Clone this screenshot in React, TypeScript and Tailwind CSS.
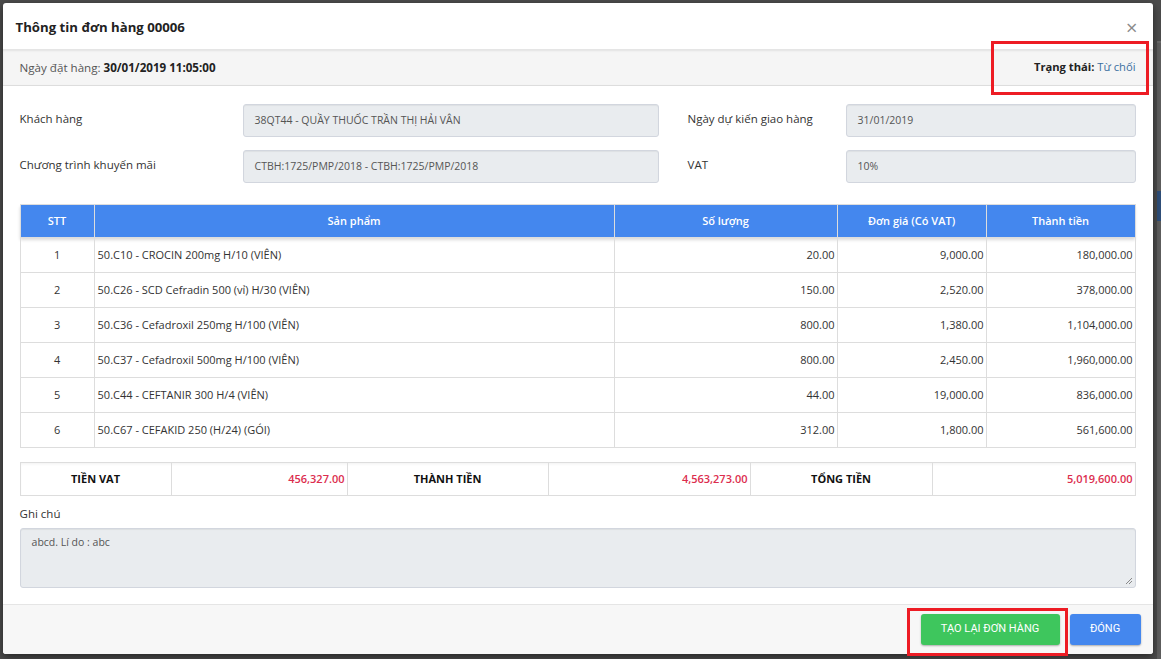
import React from 'react';

interface Row {
  stt: number;
  name: string;
  qty: string;
  price: string;
  total: string;
}

const rows: Row[] = [
  { stt: 1, name: '50.C10 - CROCIN 200mg H/10 (VIÊN)', qty: '20.00', price: '9,000.00', total: '180,000.00' },
  { stt: 2, name: '50.C26 - SCD Cefradin 500 (vỉ) H/30 (VIÊN)', qty: '150.00', price: '2,520.00', total: '378,000.00' },
  { stt: 3, name: '50.C36 - Cefadroxil 250mg H/100 (VIÊN)', qty: '800.00', price: '1,380.00', total: '1,104,000.00' },
  { stt: 4, name: '50.C37 - Cefadroxil 500mg H/100 (VIÊN)', qty: '800.00', price: '2,450.00', total: '1,960,000.00' },
  { stt: 5, name: '50.C44 - CEFTANIR 300 H/4 (VIÊN)', qty: '44.00', price: '19,000.00', total: '836,000.00' },
  { stt: 6, name: '50.C67 - CEFAKID 250 (H/24) (GÓI)', qty: '312.00', price: '1,800.00', total: '561,600.00' },
];

const font = "font-['Open_Sans','Noto_Sans',sans-serif]";

const ReadOnlyField = ({ value }: { value: string }) => (
  <div className="h-[33px] rounded-[3px] border border-[#d2d6de] bg-[#e9ecef] px-[11px] flex items-center text-[10.5px] text-[#555] shadow-[inset_0_1px_1px_rgba(0,0,0,0.05)]">
    {value}
  </div>
);

const App = () => {
  return (
    <div className={`${font} flex h-[659px] w-[1161px] overflow-hidden bg-[#4c4c4c]`}>
      <div className="w-[4px]" />
      <div className="flex flex-col pt-[3px]">
        <div className="relative flex h-[651px] w-[1150px] flex-col rounded-[3px] bg-white shadow-[0_3px_9px_rgba(0,0,0,0.5)]">
          {/* header */}
          <div className="flex h-[47px] items-center justify-between border-b border-[#e5e5e5] pl-[13px] pr-[15px] pt-[3px]">
            <h4 className="text-[13.2px] font-bold text-[#222]">Thông tin đơn hàng 00006</h4>
            <span className="text-[20px] leading-none text-[#8a8a8a]">×</span>
          </div>

          {/* order date / status */}
          <div className="flex h-[36px] items-center justify-between border-b border-[#ddd] bg-[#f5f5f5] pl-[17px] pr-[17px] text-[11.6px] text-[#333] shadow-[inset_0_1px_2px_rgba(0,0,0,0.08)]">
            <div>
              <span className="text-[#555]">Ngày đặt hàng: </span>
              <span className="font-bold text-[#222]">30/01/2019 11:05:00</span>
            </div>
            <div className="text-[11.2px]">
              <span className="font-bold text-[#222]">Trạng thái: </span>
              <span className="text-[#3b6fa0]">Từ chối</span>
            </div>
          </div>

          {/* body */}
          <div className="flex flex-1 flex-col px-[17px] pt-[18px]">
            <div className="grid grid-cols-[223px_416px_29px_158px_290px] gap-y-[13px] text-[11.5px] text-[#333]">
              <div className="pt-[6px]">Khách hàng</div>
              <ReadOnlyField value="38QT44 - QUẦY THUỐC TRẦN THỊ HẢI VÂN" />
              <div />
              <div className="pt-[6px]">Ngày dự kiến giao hàng</div>
              <ReadOnlyField value="31/01/2019" />
              <div className="pt-[6px]">Chương trình khuyến mãi</div>
              <ReadOnlyField value="CTBH:1725/PMP/2018 - CTBH:1725/PMP/2018" />
              <div />
              <div className="pt-[6px]">VAT</div>
              <ReadOnlyField value="10%" />
            </div>

            {/* products */}
            <table className="mt-[21px] w-full table-fixed border-collapse text-[11px] text-[#333]">
              <colgroup>
                <col className="w-[74px]" />
                <col className="w-[520px]" />
                <col className="w-[223px]" />
                <col className="w-[149px]" />
                <col />
              </colgroup>
              <thead>
                <tr className="h-[33px] bg-[#4487ee] text-white shadow-[0_2px_3px_rgba(0,0,0,0.15)]">
                  {['STT', 'Sản phẩm', 'Số lượng', 'Đơn giá (Có VAT)', 'Thành tiền'].map((h) => (
                    <th key={h} className="border border-[#ddd] font-semibold">
                      {h}
                    </th>
                  ))}
                </tr>
              </thead>
              <tbody>
                {rows.map((r) => (
                  <tr key={r.stt} className="h-[35px]">
                    <td className="border border-[#ddd] text-center">{r.stt}</td>
                    <td className="border border-[#ddd] px-[3px]">{r.name}</td>
                    <td className="border border-[#ddd] px-[2px] text-right">{r.qty}</td>
                    <td className="border border-[#ddd] px-[2px] text-right">{r.price}</td>
                    <td className="border border-[#ddd] px-[2px] text-right">{r.total}</td>
                  </tr>
                ))}
              </tbody>
            </table>

            {/* totals */}
            <table className="mt-[14px] w-full table-fixed border-collapse text-[11px] shadow-[inset_0_2px_3px_rgba(0,0,0,0.06)]">
              <colgroup>
                <col className="w-[151px]" />
                <col className="w-[176px]" />
                <col className="w-[201px]" />
                <col className="w-[202px]" />
                <col className="w-[182px]" />
                <col />
              </colgroup>
              <tbody>
                <tr className="h-[33px]">
                  <td className="border border-[#ddd] text-center font-bold text-[#111]">TIỀN VAT</td>
                  <td className="border border-[#ddd] px-[2px] text-right font-semibold text-[#dc2d4e]">456,327.00</td>
                  <td className="border border-[#ddd] text-center font-bold text-[#111]">THÀNH TIỀN</td>
                  <td className="border border-[#ddd] px-[2px] text-right font-semibold text-[#dc2d4e]">4,563,273.00</td>
                  <td className="border border-[#ddd] text-center font-bold text-[#111]">TỔNG TIỀN</td>
                  <td className="border border-[#ddd] px-[2px] text-right font-semibold text-[#dc2d4e]">5,019,600.00</td>
                </tr>
              </tbody>
            </table>

            {/* note */}
            <div className="mt-[9px] text-[11.5px] text-[#333]">Ghi chú</div>
            <div className="relative mt-[6px] h-[60px] rounded-[3px] border border-[#d2d6de] bg-[#e9ecef] px-[11px] pt-[6px] text-[10.5px] text-[#555] shadow-[inset_0_1px_1px_rgba(0,0,0,0.06)]">
              abcd. Lí do : abc
              <svg className="absolute bottom-[2px] right-[2px]" width="8" height="8" viewBox="0 0 8 8">
                <path d="M7 1L1 7M7 4L4 7" stroke="#888" strokeWidth="1" />
              </svg>
            </div>
          </div>

          {/* footer */}
          <div className="flex h-[50px] items-center justify-end gap-[10px] rounded-b-[3px] border-t border-[#e5e5e5] bg-[#f7f7f7] pr-[12px] font-['Roboto',sans-serif]">
            <button className="h-[31px] w-[139px] rounded-[3px] bg-[#3ec65d] text-[11px] font-normal text-white shadow-[0_1px_2px_rgba(0,0,0,0.3)]">
              TẠO LẠI ĐƠN HÀNG
            </button>
            <button className="h-[31px] w-[71px] rounded-[3px] bg-[#4487ee] text-[11px] font-normal text-white shadow-[0_1px_2px_rgba(0,0,0,0.3)]">
              ĐÓNG
            </button>
          </div>

          {/* annotation boxes */}
          <div className="pointer-events-none absolute left-[988px] top-[38px] h-[54px] w-[158px] border-[3px] border-[#ed1c24]" />
          <div className="pointer-events-none absolute left-[904px] top-[605px] h-[48px] w-[161px] border-[3px] border-[#ed1c24]" />
        </div>
      </div>

      {/* page behind the backdrop */}
      <div className="ml-[4px] flex w-[7px] flex-col">
        <div className="h-[41px] bg-[#4c4c4c]" />
        <div className="h-[2px] bg-[#6a6a6a]" />
        <div className="h-[148px] bg-[#5e5e5e]" />
        <div className="h-[30px] bg-[#2f4f7a]" />
        <div className="flex-1 bg-[#5e5e5e]" />
      </div>
    </div>
  );
};

export default App;
